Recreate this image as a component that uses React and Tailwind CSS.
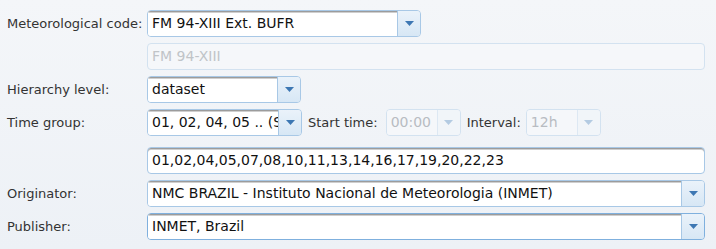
import React from "react";

const font = { fontFamily: '"DejaVu Sans", Verdana, sans-serif' };

function Tri({ disabled }) {
  return (
    <svg width="9" height="5" viewBox="0 0 9 5">
      <path d="M0 0 H9 L4.5 5 Z" fill={disabled ? "#b4cbe2" : "#3d77b3"} />
    </svg>
  );
}

function Combo({ value, width, disabled, focused }) {
  return (
    <div
      className={`flex h-[27px] rounded-[4px] border overflow-hidden ${
        disabled ? "border-[#d3e2f0]" : focused ? "border-[#7fb0de]" : "border-[#a8c8e6]"
      } ${width}`}
    >
      <div
        className={`flex-1 min-w-0 flex items-center pl-[4px] whitespace-nowrap overflow-hidden text-[14px] ${
          disabled
            ? "bg-[#f5f7fa] text-[#b8bcc2]"
            : "bg-white text-[#111] shadow-[inset_0_1px_0_#9c9c9c,inset_0_2px_0_#cfcfcf]"
        }`}
      >
        {value}
      </div>
      <div
        className={`w-[23px] shrink-0 flex items-center justify-center border-l ${
          disabled
            ? "border-[#dde8f3] bg-[#f1f5f9]"
            : "border-[#a8c8e6] bg-gradient-to-b from-[#eaf2fa] to-[#d7e7f5]"
        }`}
      >
        <Tri disabled={disabled} />
      </div>
    </div>
  );
}

function Text({ value, disabled }) {
  return (
    <div
      className={`h-[27px] w-[558px] rounded-[4px] border flex items-center pl-[4px] text-[14px] ${
        disabled
          ? "border-[#d3e2f0] bg-[#f5f7fa] text-[#c0c4c8]"
          : "border-[#a8c8e6] bg-white text-[#111] shadow-[inset_0_1px_0_#9c9c9c,inset_0_2px_0_#cfcfcf]"
      }`}
    >
      {value}
    </div>
  );
}

function Row({ label, children, className = "" }) {
  return (
    <div className={`flex items-center h-[27px] ${className}`}>
      <div className="w-[140px] shrink-0 text-[#333]">{label}</div>
      {children}
    </div>
  );
}

export default function App() {
  return (
    <div
      className="w-[716px] h-[249px] bg-gradient-to-b from-[#f4f6f9] to-[#edf1f6] pl-[7px] pt-[10px] text-[13px] flex flex-col gap-[6px]"
      style={font}
    >
      <Row label="Meteorological code:">
        <Combo value="FM 94-XIII Ext. BUFR" width="w-[274px]" />
      </Row>
      <Row label="">
        <Text value="FM 94-XIII" disabled />
      </Row>
      <Row label="Hierarchy level:">
        <Combo value="dataset" width="w-[154px]" />
      </Row>
      <Row label="Time group:">
        <Combo value="01, 02, 04, 05 .. (S" width="w-[155px]" />
        <span className="ml-[6px] text-[#333]">Start time:</span>
        <div className="ml-[8px]">
          <Combo value="00:00" width="w-[75px]" disabled />
        </div>
        <span className="ml-[6px] text-[#333]">Interval:</span>
        <div className="ml-[5px]">
          <Combo value="12h" width="w-[75px]" disabled />
        </div>
      </Row>
      <Row label="" className="mt-[5px]">
        <Text value="01,02,04,05,07,08,10,11,13,14,16,17,19,20,22,23" />
      </Row>
      <Row label="Originator:">
        <Combo
          value="NMC BRAZIL - Instituto Nacional de Meteorologia (INMET)"
          width="w-[558px]"
        />
      </Row>
      <Row label="Publisher:">
        <Combo value="INMET, Brazil" width="w-[558px]" focused />
      </Row>
    </div>
  );
}
